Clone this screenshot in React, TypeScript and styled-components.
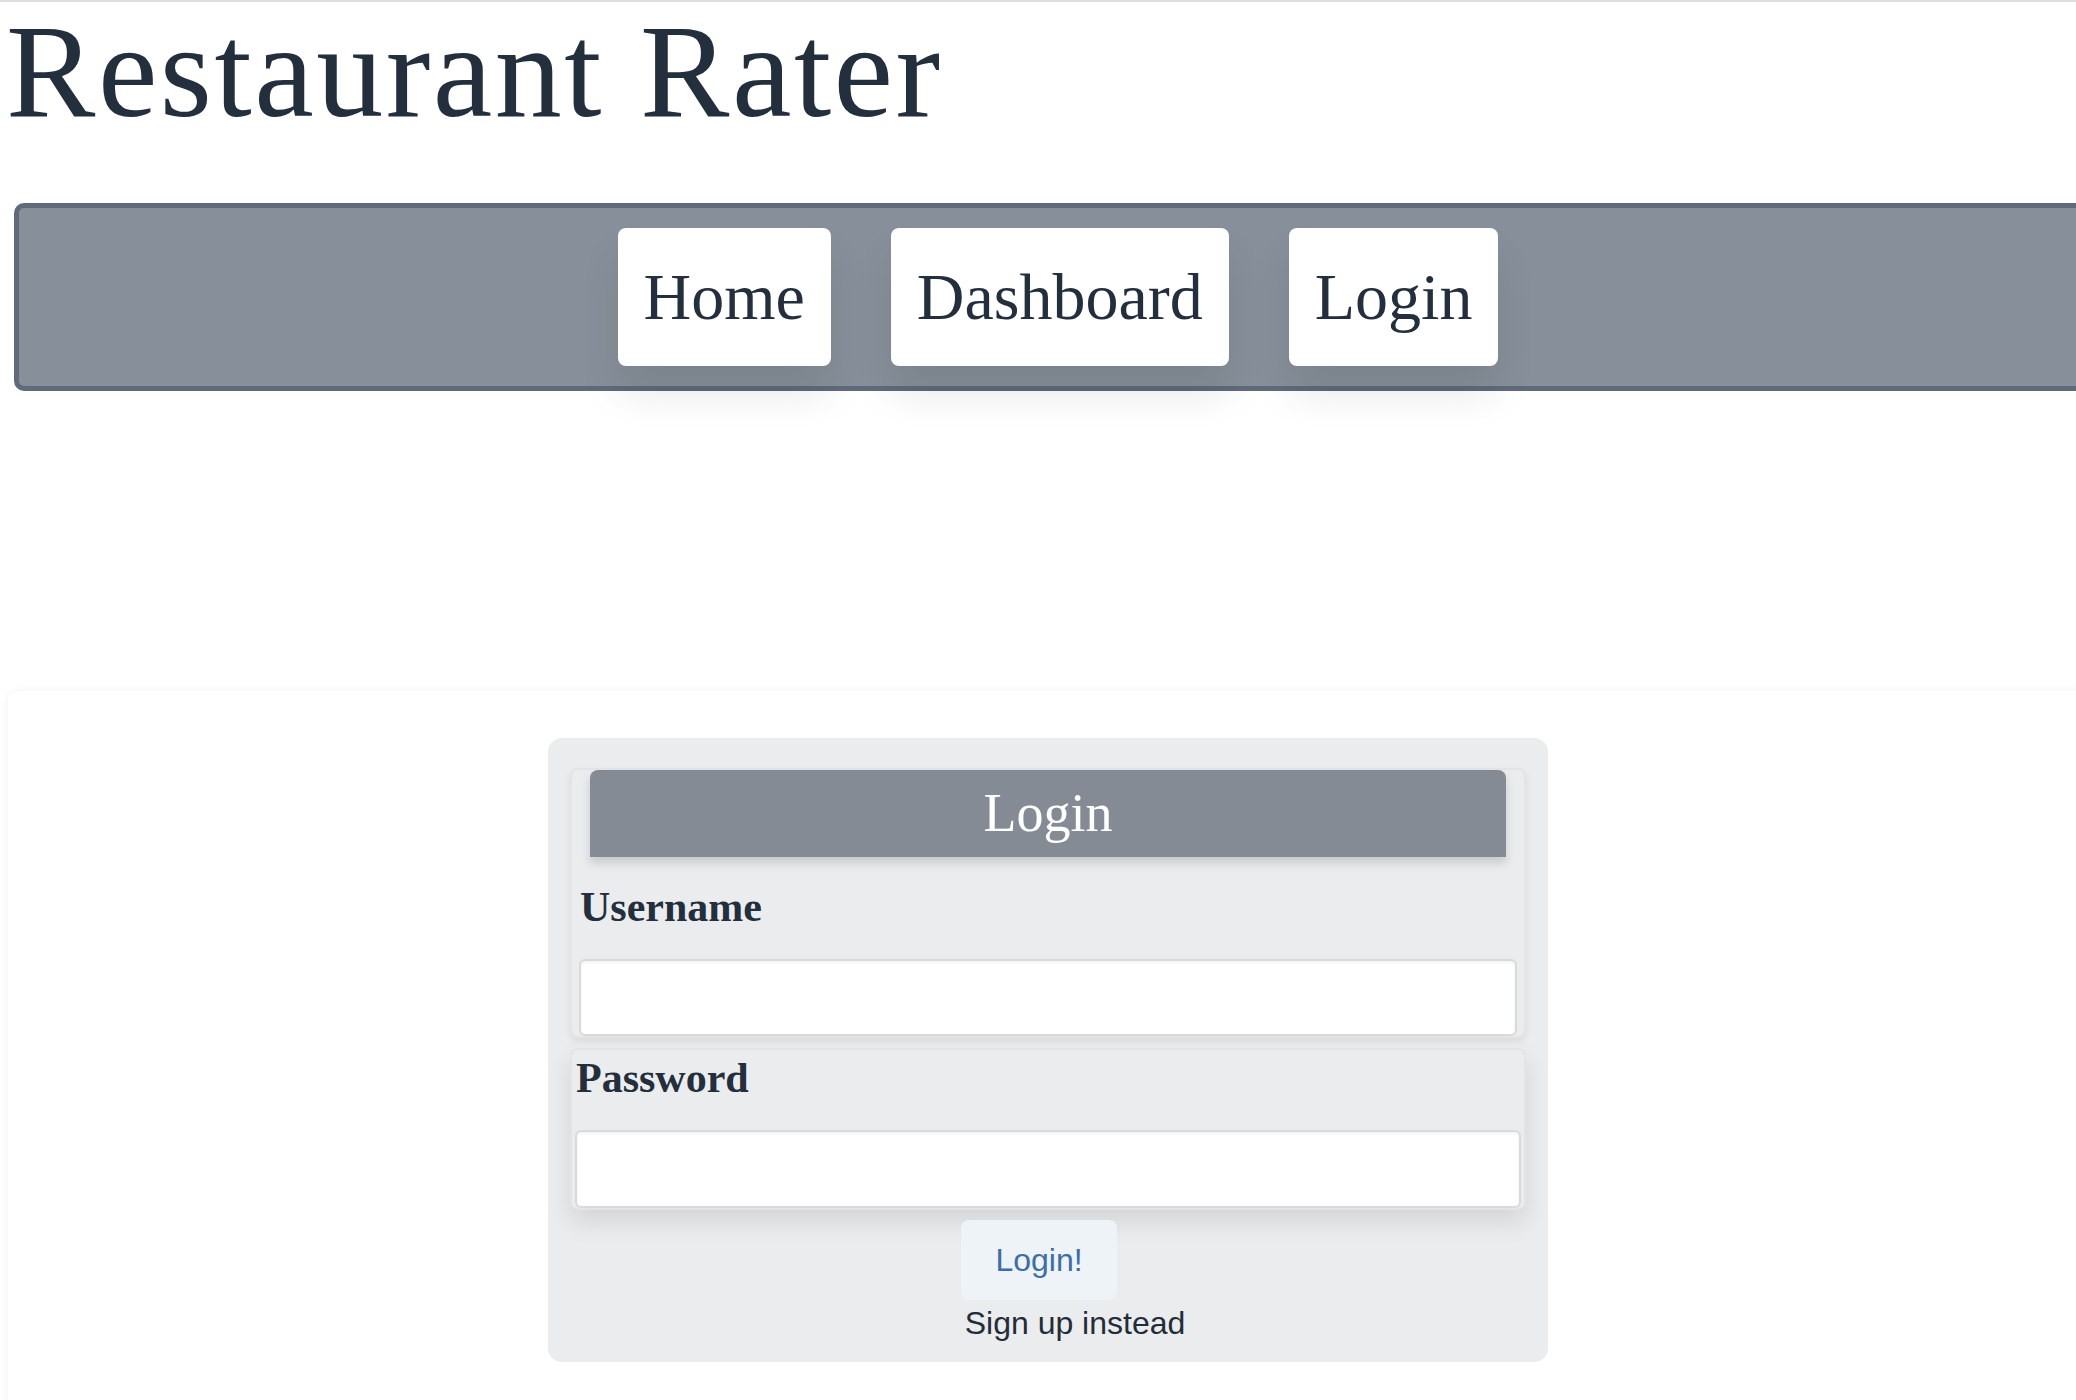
import styled, { createGlobalStyle } from 'styled-components';

const GlobalStyle = createGlobalStyle`
  html, body {
    margin: 0;
    padding: 0;
    background: #ffffff;
    overflow-x: hidden;
  }
  body {
    font-family: "Liberation Serif", "Times New Roman", serif;
    color: #232f3c;
    border-top: 2px solid #dedede;
  }
  ::-webkit-scrollbar {
    display: none;
  }
  * {
    box-sizing: border-box;
  }
`;

export default function App() {
  return (
    <>
      <GlobalStyle />
      <Page>
        <Title>Restaurant Rater</Title>
        <NavBar>
          <NavButton>Home</NavButton>
          <NavButton>Dashboard</NavButton>
          <NavButton>Login</NavButton>
        </NavBar>
        <Panel>
          <LoginBox>
            <FieldGroup $first>
              <Header>Login</Header>
              <Label htmlFor="username" $indent={8}>
                Username
              </Label>
              <TextInput id="username" type="text" $inset={7} $height={77} />
            </FieldGroup>
            <FieldGroup>
              <Label htmlFor="password" $indent={4} $top={4}>
                Password
              </Label>
              <TextInput id="password" type="password" $inset={3} $height={78} />
            </FieldGroup>
            <Actions>
              <SubmitButton type="button">Login!</SubmitButton>
              <SignUp>Sign up instead</SignUp>
            </Actions>
          </LoginBox>
        </Panel>
      </Page>
    </>
  );
}

const Page = styled.div`
  display: flex;
  flex-direction: column;
  width: 2102px;
`;

const Title = styled.h1`
  margin: 0;
  padding-left: 6px;
  font-size: 134px;
  line-height: 138px;
  font-weight: 400;
  letter-spacing: 2.5px;
  color: #232f3c;
`;

const NavBar = styled.nav`
  display: flex;
  justify-content: center;
  gap: 60px;
  margin: 63px 0 0 14px;
  width: 2088px;
  padding: 20px;
  background: #87909a;
  border: 5px solid #5f6b7a;
  border-radius: 10px;
`;

const NavButton = styled.button`
  display: flex;
  align-items: center;
  height: 138px;
  padding: 0 26px;
  background: #ffffff;
  border: none;
  border-radius: 8px;
  font-family: "Liberation Serif", "Times New Roman", serif;
  font-size: 66px;
  color: #232f3c;
  box-shadow: 0 28px 40px rgba(0, 0, 0, 0.09);
  cursor: pointer;
`;

const Panel = styled.main`
  margin: 300px 0 0 8px;
  width: 2080px;
  min-height: 760px;
  padding-top: 47px;
  background: #ffffff;
  border-radius: 10px;
  box-shadow: 0 0 8px rgba(0, 0, 0, 0.06);
`;

const LoginBox = styled.section`
  display: flex;
  flex-direction: column;
  gap: 10px;
  width: 1000px;
  margin: 0 auto;
  padding: 30px 22px 20px;
  background: #ebecee;
  border-radius: 14px;
`;

const FieldGroup = styled.div<{ $first?: boolean }>`
  display: flex;
  flex-direction: column;
  background: #ebecee;
  border: 2px solid #e3e4e6;
  border-radius: 8px;
  box-shadow: ${(p) =>
    p.$first
      ? '0 3px 6px rgba(0, 0, 0, 0.08)'
      : '0 12px 24px rgba(0, 0, 0, 0.1)'};
`;

const Header = styled.h2`
  margin: 0 18px;
  height: 87px;
  line-height: 87px;
  text-align: center;
  font-size: 54px;
  font-weight: 400;
  color: #ffffff;
  background: #858b95;
  border-radius: 8px 8px 0 0;
  box-shadow: 0 6px 10px rgba(0, 0, 0, 0.15);
`;

const Label = styled.label<{ $indent: number; $top?: number }>`
  display: block;
  margin: ${(p) => (p.$top ?? 26)}px 0 28px ${(p) => p.$indent}px;
  font-size: 42px;
  font-weight: 700;
  color: #232f3c;
`;

const TextInput = styled.input<{ $inset: number; $height: number }>`
  display: block;
  margin: 0 ${(p) => p.$inset}px;
  height: ${(p) => p.$height}px;
  padding: 0 16px;
  background: #ffffff;
  border: 2px solid #d9d9d9;
  border-radius: 6px;
  box-shadow: inset 0 2px 3px rgba(0, 0, 0, 0.05);
  font-size: 28px;
  outline: none;
`;

const Actions = styled.div`
  display: flex;
  flex-direction: column;
  align-items: center;
`;

const SubmitButton = styled.button`
  height: 80px;
  padding: 0 34px;
  margin-right: 18px;
  background: #eef3f8;
  border: none;
  border-radius: 8px;
  font-family: "Liberation Sans", Arial, sans-serif;
  font-size: 32px;
  color: #3d6ea6;
  cursor: pointer;
`;

const SignUp = styled.span`
  margin: 5px 0 0 54px;
  font-family: "Liberation Sans", Arial, sans-serif;
  font-size: 32px;
  color: #232d39;
`;
